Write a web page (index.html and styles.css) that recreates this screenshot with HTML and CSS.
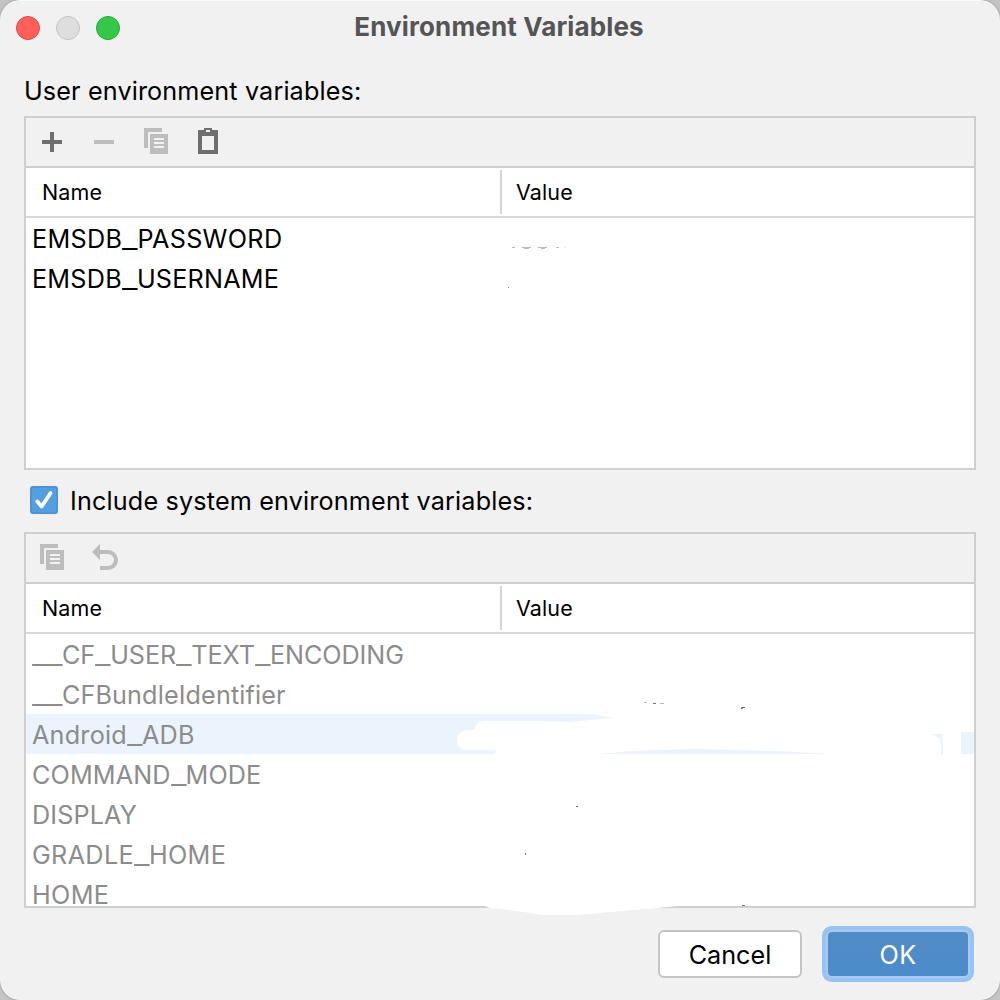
FILE: index.html
```html
<!DOCTYPE html>
<html lang="en">
<head>
<meta charset="utf-8">
<title>Environment Variables</title>
<link rel="stylesheet" href="styles.css">
</head>
<body>
<svg width="0" height="0" class="symbols">
  <symbol id="copy" viewBox="0 0 24 26"><path fill="#bdbdbd" fill-rule="evenodd" d="M0 0h18v4H4v16H0zM6 6h18v20H6zM10 10v2h10v-2zM10 14v2h10v-2zM10 18v2h10v-2z"/></symbol>
</svg>
<main class="window">
  <header class="titlebar">
    <div class="lights"><i class="light close"></i><i class="light minimize"></i><i class="light zoom"></i></div>
    <h1 class="title">Environment Variables</h1>
  </header>
  <section class="content">
    <div class="label">User environment variables:</div>
    <div class="table user">
      <div class="toolbar">
        <svg class="icon" width="20" height="20" viewBox="0 0 20 20"><path fill="#6e6e6e" d="M8 0h4v8h8v4h-8v8H8v-8H0V8h8z"/></svg>
        <svg class="icon" width="20" height="20" viewBox="0 0 20 20"><path fill="#bdbdbd" d="M0 8h20v4H0z"/></svg>
        <svg class="icon" width="24" height="26"><use href="#copy"/></svg>
        <svg class="icon" width="20" height="26" viewBox="0 0 20 26"><path fill="#6e6e6e" fill-rule="evenodd" d="M6 0h8v2h6v24H0V2h6zM8 2v2h4V2zM4 8v14h12V8z"/></svg>
      </div>
      <div class="head"><div class="th first">Name</div><div class="th">Value</div></div>
      <div class="rows">
        <div class="row wide">EMSDB<span class="us">_</span>PASSWORD</div>
        <div class="row">EMSDB<span class="us">_</span>USERNAME</div>
      </div>
    </div>
    <label class="check">
      <svg width="28" height="28" viewBox="0 0 28 28"><rect width="28" height="28" rx="3" fill="#4791d4"/><rect x="1.5" y="1.5" width="25" height="25" rx="2" fill="#549fe0"/><path d="M7.3 15.5l4.3 5L20.6 7" fill="none" stroke="#fff" stroke-width="3.8" stroke-linecap="round" stroke-linejoin="round"/></svg>
      <span>Include system environment variables:</span>
    </label>
    <div class="table system">
      <div class="toolbar">
        <svg class="icon" width="24" height="26"><use href="#copy"/></svg>
        <svg class="icon undo" width="26" height="26" viewBox="0 0 26 26"><path fill="#bdbdbd" d="M0 8L8 0v6h8a10 10 0 0 1 0 20H8v-4h8a6 6 0 0 0 0-12H8v6z"/></svg>
      </div>
      <div class="head"><div class="th first">Name</div><div class="th">Value</div></div>
      <div class="rows">
        <div class="row narrow"><span class="us">_</span><span class="us">_</span>CF<span class="us">_</span>USER<span class="us">_</span>TEXT<span class="us">_</span>ENCODING</div>
        <div class="row tight"><span class="us">_</span><span class="us">_</span>CFBundleIdentifier</div>
        <div class="row selected">Android<span class="us">_</span>ADB</div>
        <div class="row tight">COMMAND<span class="us">_</span>MODE</div>
        <div class="row tight">DISPLAY</div>
        <div class="row wide">GRADLE<span class="us">_</span>HOME</div>
        <div class="row wide">HOME</div>
      </div>
    </div>
    <footer class="actions">
      <button class="button">Cancel</button>
      <button class="button primary">OK</button>
    </footer>
  </section>
  <svg class="marks" width="1000" height="1000" viewBox="0 0 1000 1000">
    <g fill="#fff">
      <path d="M588 714L613 717.5L590 720L570 722L535 721H483Q476 722 474 730H468C454 730 453 750 467 750H496L495 754H599Q625 751 655 750L696 749L740 750L790 751.5L829 754H941V744Q940 736 930 734H943V754H961V732H974V714z"/>
      <path d="M482 905L490 908L517 911L543 915H576L605 912.5L657 908L690 905z"/>
    </g>
    <path fill="#bbb" d="M512 247h3v1h-3zM522 247h9v1h-2v1h-5v-1h-2zM538 247h9v1h-2v1h-4v-1h-3zM556 247h3v1h-3zM644 702h3v1h-3zM660 703h4v1h-4z"/>
    <path fill="#eee" d="M564 247h2v1h-2zM649 857h1v1h-1zM545 851h1v1h-1z"/>
    <path fill="#777" d="M508 287h1v1h-1zM653 703h3v1h-3zM741 707h4v1h-2v1h-2zM576 806h2v1h-2zM525 853h1v2h-1zM742 905h3v1h-3z"/>
  </svg>
</main>
</body>
</html>
```
FILE: styles.css
```css
* { box-sizing: border-box; }
body { margin: 0; background: #c4c4c4; font-family: Inter, "Liberation Sans", sans-serif; font-size: 25.2px; color: #000; }
.symbols { position: absolute; }
.window { position: relative; width: 1000px; height: 1000px; overflow: hidden; background: #f1f1f1; border-radius: 20px; border-top: 1px solid #fafafa; box-shadow: 0 0 2px #777; }
.titlebar { height: 55px; display: grid; grid-template-columns: 120px 1fr 120px; align-items: center; padding-bottom: 2px; }
.lights { display: flex; gap: 16px; padding-left: 16px; }
.light { width: 24px; height: 24px; border-radius: 50%; border: 1px solid; }
.close { background: #ff605c; border-color: #e14942; }
.minimize { background: #dedede; border-color: #c1c1c1; }
.zoom { background: #34c748; border-color: #26a934; }
.title { margin: 0; padding: 0 2px 2px 0; text-align: center; font-size: 26px; font-weight: 700; letter-spacing: 0.13px; color: #555; line-height: 32px; }
.content { padding: 0 24px; }
.label { height: 60px; padding-top: 18px; line-height: 34px; letter-spacing: 0.13px; }
.table { border: 2px solid #cfcfcf; background: #fff; }
.user { height: 354px; }
.system { height: 376px; color: #8c8c8c; }
.toolbar { height: 50px; background: #f1f1f1; border-bottom: 2px solid #cfcfcf; display: flex; align-items: center; padding-left: 16px; gap: 32px; }
.user .icon:nth-child(3) { margin: 0 -2px; }
.system .toolbar { padding-left: 14px; gap: 28px; }
.toolbar .icon { flex: none; }
.user .icon:nth-child(n+3), .system .icon { margin-top: -2px; }
.head { height: 50px; border-bottom: 2px solid #d9d9d9; display: grid; grid-template-columns: 476px 1fr; padding: 2px 0; color: #000; font-size: 21.5px; letter-spacing: 0.1px; }
.th { display: flex; align-items: center; padding-left: 14px; }
.first { padding-left: 16px; border-right: 2px solid #d4d4d4; }
.row { height: 40px; line-height: 42px; padding-left: 6px; white-space: nowrap; letter-spacing: 0.23px; }
.wide { letter-spacing: 0.33px; }
.tight { letter-spacing: 0.12px; }
.narrow { letter-spacing: -0.05px; }
.us { display: inline-block; width: 15px; letter-spacing: 0; transform: scaleX(1.35); transform-origin: left; }
.selected { background: #ebf4fc; }
.check { height: 62px; display: flex; align-items: center; gap: 12px; padding-left: 6px; letter-spacing: 0.16px; }
.check svg { margin-top: -2px; }
.actions { display: flex; justify-content: flex-end; align-items: center; gap: 26px; padding: 22px 12px 0 0; }
.button { width: 144px; height: 48px; padding: 2px 0 0; font: inherit; background: #fff; border: 2px solid #c4c4c4; border-radius: 6px; color: #000; }
.primary { width: 140px; height: 44px; border: 0; border-radius: 4px; color: #fff; background: linear-gradient(#528cc6, #4c8bca); box-shadow: 0 0 0 2px #a9c9f2, 0 0 0 6px #97c3f3; margin-right: -4px; letter-spacing: 0.3px; }
.marks { position: absolute; left: 0; top: -1px; pointer-events: none; }
```
